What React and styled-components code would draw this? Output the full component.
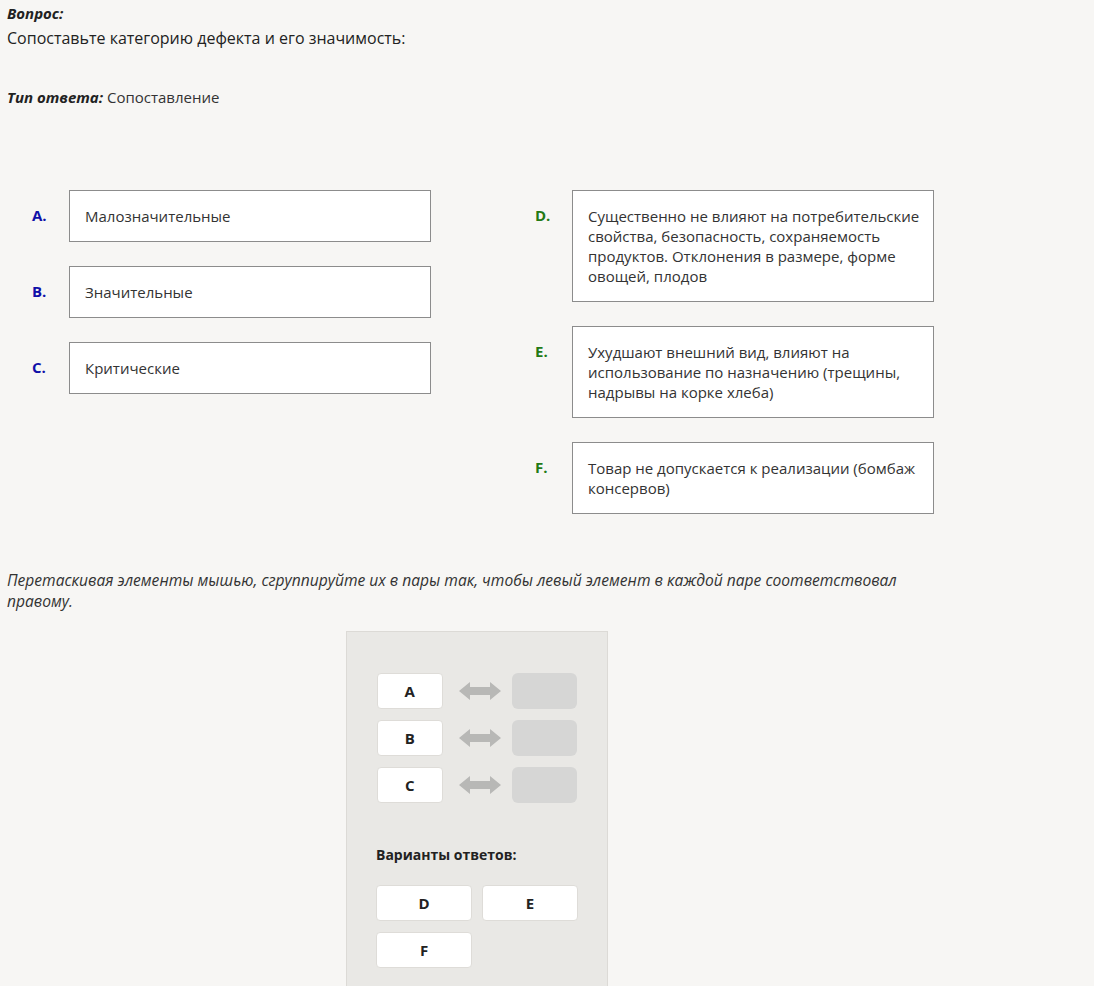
import React from "react";
import styled, { createGlobalStyle } from "styled-components";

const GlobalStyle = createGlobalStyle`
  body {
    margin: 0;
    background: #f7f6f4;
    font-family: "Open Sans", "Noto Sans", sans-serif;
    color: #333;
  }
`;

const left = [
  { key: "A", text: "Малозначительные" },
  { key: "B", text: "Значительные" },
  { key: "C", text: "Критические" },
];

const right = [
  {
    key: "D",
    text: "Существенно не влияют на потребительские свойства, безопасность, сохраняемость продуктов. Отклонения в размере, форме овощей, плодов",
  },
  {
    key: "E",
    text: "Ухудшают внешний вид, влияют на использование по назначению (трещины, надрывы на корке хлеба)",
  },
  { key: "F", text: "Товар не допускается к реализации (бомбаж консервов)" },
];

function Arrow() {
  return (
    <svg width="42" height="20" viewBox="0 0 42 20">
      <path
        d="M0 10 L11 1 L11 6 L31 6 L31 1 L42 10 L31 19 L31 14 L11 14 L11 19 Z"
        fill="#b8b8b6"
      />
    </svg>
  );
}

export default function App() {
  return (
    <Page>
      <GlobalStyle />
      <Caption>Вопрос:</Caption>
      <Question>Сопоставьте категорию дефекта и его значимость:</Question>
      <AnswerType>
        <b>Тип ответа:</b> Сопоставление
      </AnswerType>

      <Columns>
        <Column>
          {left.map((item) => (
            <Item key={item.key}>
              <Letter $color="#1010a8">{item.key}.</Letter>
              <Box>{item.text}</Box>
            </Item>
          ))}
        </Column>
        <Column>
          {right.map((item) => (
            <Item key={item.key}>
              <Letter $color="#237a14">{item.key}.</Letter>
              <Box>{item.text}</Box>
            </Item>
          ))}
        </Column>
      </Columns>

      <Hint>
        Перетаскивая элементы мышью, сгруппируйте их в пары так, чтобы левый
        элемент в каждой паре соответствовал правому.
      </Hint>

      <Panel>
        <Pairs>
          {left.map((item) => (
            <Pair key={item.key}>
              <Chip>{item.key}</Chip>
              <ArrowWrap>
                <Arrow />
              </ArrowWrap>
              <Slot />
            </Pair>
          ))}
        </Pairs>
        <OptionsTitle>Варианты ответов:</OptionsTitle>
        <Options>
          {right.map((item) => (
            <Option key={item.key}>{item.key}</Option>
          ))}
        </Options>
      </Panel>
    </Page>
  );
}

const Page = styled.div`
  padding: 3px 7px 0;
`;

const Caption = styled.div`
  font-size: 15px;
  line-height: 20px;
  font-weight: bold;
  font-style: italic;
  color: #222;
`;

const Question = styled.div`
  font-size: 16px;
  line-height: 24px;
  margin-top: 3px;
  color: #222;
`;

const AnswerType = styled.div`
  margin-top: 37px;
  font-size: 15px;
  line-height: 20px;
  color: #333;

  b {
    font-style: italic;
    color: #222;
  }
`;

const Columns = styled.div`
  display: flex;
  gap: 104px;
  margin-top: 83px;
  padding-left: 25px;
  align-items: flex-start;
`;

const Column = styled.div`
  display: flex;
  flex-direction: column;
  gap: 24px;
  width: 399px;
`;

const Item = styled.div`
  display: flex;
  align-items: flex-start;
`;

const Letter = styled.div`
  width: 37px;
  flex-shrink: 0;
  padding-top: 15px;
  font-size: 15px;
  line-height: 20px;
  font-weight: bold;
  color: ${(p) => p.$color};
`;

const Box = styled.div`
  flex: 1;
  background: #fff;
  border: 1px solid #8c8c8c;
  padding: 15px 10px 15px 15px;
  font-size: 15px;
  line-height: 20px;
  color: #333;
`;

const Hint = styled.div`
  margin-top: 56px;
  width: 910px;
  font-size: 15.6px;
  line-height: 21px;
  font-style: italic;
  color: #333;
`;

const Panel = styled.div`
  margin: 19px 0 0 339px;
  width: 200px;
  padding: 41px 30px 20px;
  background: #e9e8e5;
  border: 1px solid #dcdad6;
`;

const Pairs = styled.div`
  display: flex;
  flex-direction: column;
  gap: 11px;
`;

const Pair = styled.div`
  display: flex;
  align-items: center;
`;

const ArrowWrap = styled.div`
  display: flex;
  margin: 0 11px 0 16px;
`;

const Chip = styled.div`
  width: 64px;
  height: 34px;
  background: #fff;
  border: 1px solid #dedcd8;
  border-radius: 4px;
  display: flex;
  align-items: center;
  justify-content: center;
  font-size: 15px;
  font-weight: bold;
  color: #222;
`;

const Slot = styled.div`
  width: 66px;
  height: 36px;
  background: #d6d6d5;
  border-radius: 6px;
`;

const OptionsTitle = styled.div`
  margin-top: 42px;
  margin-left: -1px;
  font-size: 14px;
  line-height: 20px;
  font-weight: bold;
  color: #222;
`;

const Options = styled.div`
  display: grid;
  grid-template-columns: 96px 96px;
  column-gap: 10px;
  row-gap: 11px;
  margin: 20px 0 0 -1px;
`;

const Option = styled.div`
  height: 34px;
  background: #fff;
  border: 1px solid #dedcd8;
  border-radius: 4px;
  display: flex;
  align-items: center;
  justify-content: center;
  font-size: 15px;
  font-weight: bold;
  color: #222;
`;
